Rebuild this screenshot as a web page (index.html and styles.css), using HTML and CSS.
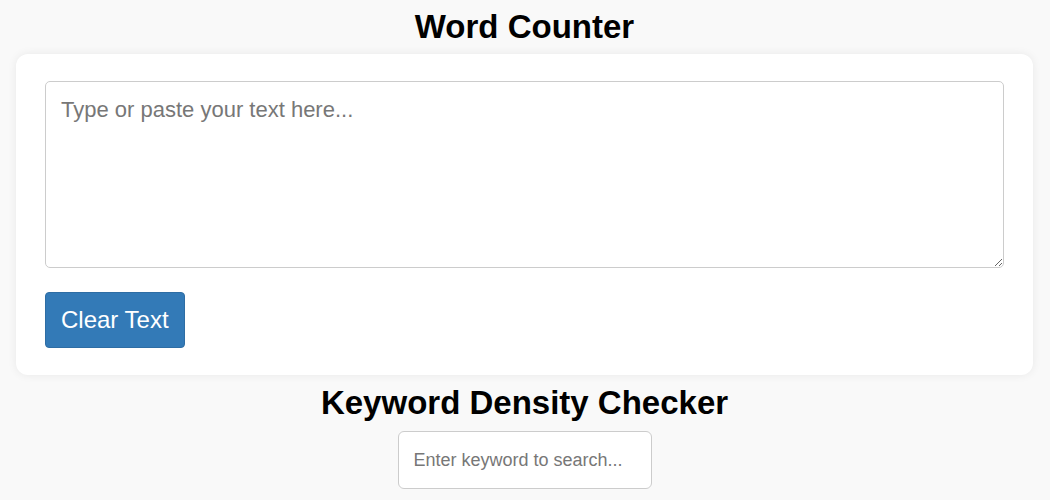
FILE: index.html
```html
<!DOCTYPE html>
<html lang="en">
<head>
  <meta charset="UTF-8" />
  <meta name="viewport" content="width=device-width, initial-scale=1.0"/>
  <title>Word Counter</title>
  <link rel="stylesheet" href="styles.css">
</head>
<body>
  <h1>Word Counter</h1>

  <div class="card">
    <textarea id="textInput" placeholder="Type or paste your text here..."></textarea>
    <div class="actions">
      <button id="clearBtn" class="btn-primary">Clear Text</button>
    </div>
  </div>

  <h2>Keyword Density Checker</h2>
  <div class="keyword-row">
    <input type="text" id="keywordInput" placeholder="Enter keyword to search...">
  </div>

  <script>
    const textInput = document.getElementById('textInput');
    document.getElementById('clearBtn').addEventListener('click', () => {
      textInput.value = '';
    });
  </script>
</body>
</html>
```

FILE: styles.css
```css
body {
  font-family: 'Liberation Sans', Arial, sans-serif;
  margin: 0;
  padding: 8px 17px 0 16px;
  background-color: #f9f9f9;
  color: #000;
}

h1,
h2 {
  margin: 0;
  font-size: 33px;
  font-weight: bold;
  text-align: center;
}

h1 {
  margin-bottom: 8px;
}

h2 {
  margin-top: 9px;
  margin-bottom: 9px;
}

.card {
  background-color: #fff;
  border-radius: 12px;
  padding: 27px 29px 27px 29px;
  box-shadow: 0 0 10px rgba(0, 0, 0, 0.07);
}

textarea {
  display: block;
  box-sizing: border-box;
  width: 100%;
  height: 187px;
  padding: 15px;
  border: 1px solid #ccc;
  border-radius: 5px;
  font-family: 'Liberation Sans', Arial, sans-serif;
  font-size: 22px;
  color: #333;
  background: #fff;
}

textarea::placeholder,
input::placeholder {
  color: #777;
}

.actions {
  margin-top: 24px;
}

.btn-primary {
  padding: 13px 15px;
  border: 1px solid #2e6da4;
  border-radius: 4px;
  background-color: #337ab7;
  color: #fff;
  font-family: 'Liberation Sans', Arial, sans-serif;
  font-size: 24px;
  cursor: pointer;
}

.btn-primary:hover {
  background-color: #286090;
}

.keyword-row {
  display: flex;
  justify-content: center;
}

.keyword-row input {
  box-sizing: border-box;
  width: 254px;
  height: 58px;
  padding: 0 15px;
  border: 1px solid #ccc;
  border-radius: 6px;
  font-family: 'Liberation Sans', Arial, sans-serif;
  font-size: 18px;
  background: #fff;
}
```
